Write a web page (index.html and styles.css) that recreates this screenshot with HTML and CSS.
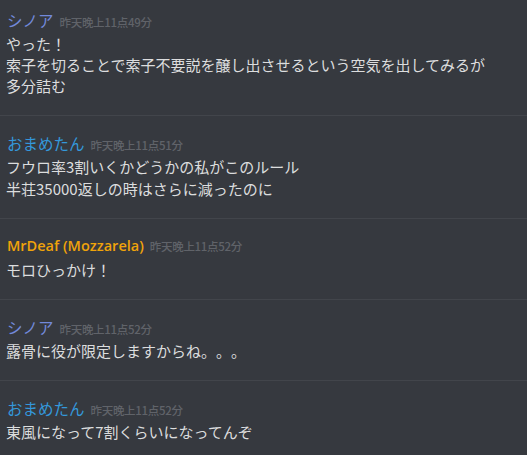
FILE: index.html
```html
<!DOCTYPE html>
<html lang="ja">
<head>
    <meta charset="UTF-8">
    <meta name="viewport" content="width=device-width, initial-scale=1.0">
    <title>チャット</title>
    <link rel="stylesheet" href="styles.css">
</head>
<body>
    <div class="chat">
        <div class="msg first">
            <div class="head"><span class="name blurple">シノア</span><span class="time">昨天晚上11点49分</span></div>
            <div class="text">やった！</div>
            <div class="text">索子を切ることで索子不要説を醸し出させるという空気を出してみるが</div>
            <div class="text">多分詰む</div>
        </div>
        <div class="msg">
            <div class="head"><span class="name blue">おまめたん</span><span class="time">昨天晚上11点51分</span></div>
            <div class="text">フウロ率3割いくかどうかの私がこのルール</div>
            <div class="text">半荘35000返しの時はさらに減ったのに</div>
        </div>
        <div class="msg">
            <div class="head"><span class="name gold latin">MrDeaf (Mozzarela)</span><span class="time">昨天晚上11点52分</span></div>
            <div class="text">モロひっかけ！</div>
        </div>
        <div class="msg">
            <div class="head"><span class="name blurple">シノア</span><span class="time">昨天晚上11点52分</span></div>
            <div class="text">露骨に役が限定しますからね。。。</div>
        </div>
        <div class="msg">
            <div class="head"><span class="name blue">おまめたん</span><span class="time">昨天晚上11点52分</span></div>
            <div class="text">東風になって7割くらいになってんぞ</div>
        </div>
    </div>
</body>
</html>
```

FILE: styles.css
```css
body {
    margin: 0;
    background: #36393f;
    font-family: "Noto Sans CJK JP", "Noto Sans", sans-serif;
    overflow: hidden;
    text-spacing-trim: space-all;
}
.chat {
    display: flex;
    flex-direction: column;
}
.msg {
    padding: 16px 6px 19px 6px;
    border-top: 1px solid #42454b;
}
.msg.first {
    border-top: none;
    margin-top: -7px;
}
.head {
    display: flex;
    align-items: baseline;
    gap: 6px;
    height: 22px;
    line-height: 22px;
    margin-bottom: 2px;
    padding-left: 1px;
}
.name {
    font-size: 15.5px;
}
.name.latin {
    font-family: "Open Sans", "Noto Sans", sans-serif;
    font-weight: 600;
    font-size: 14.5px;
    padding-left: 0;
}
.blurple {
    color: #7289da;
}
.blue {
    color: #3498db;
}
.gold {
    color: #f0a30a;
}
.time {
    font-family: "Noto Sans CJK SC", sans-serif;
    font-size: 11.5px;
    font-weight: 500;
    color: #606369;
    letter-spacing: -0.3px;
}
.text {
    font-size: 15px;
    line-height: 21px;
    color: #dcddde;
}
.msg:nth-child(2) .text {
    line-height: 21.5px;
}
```
